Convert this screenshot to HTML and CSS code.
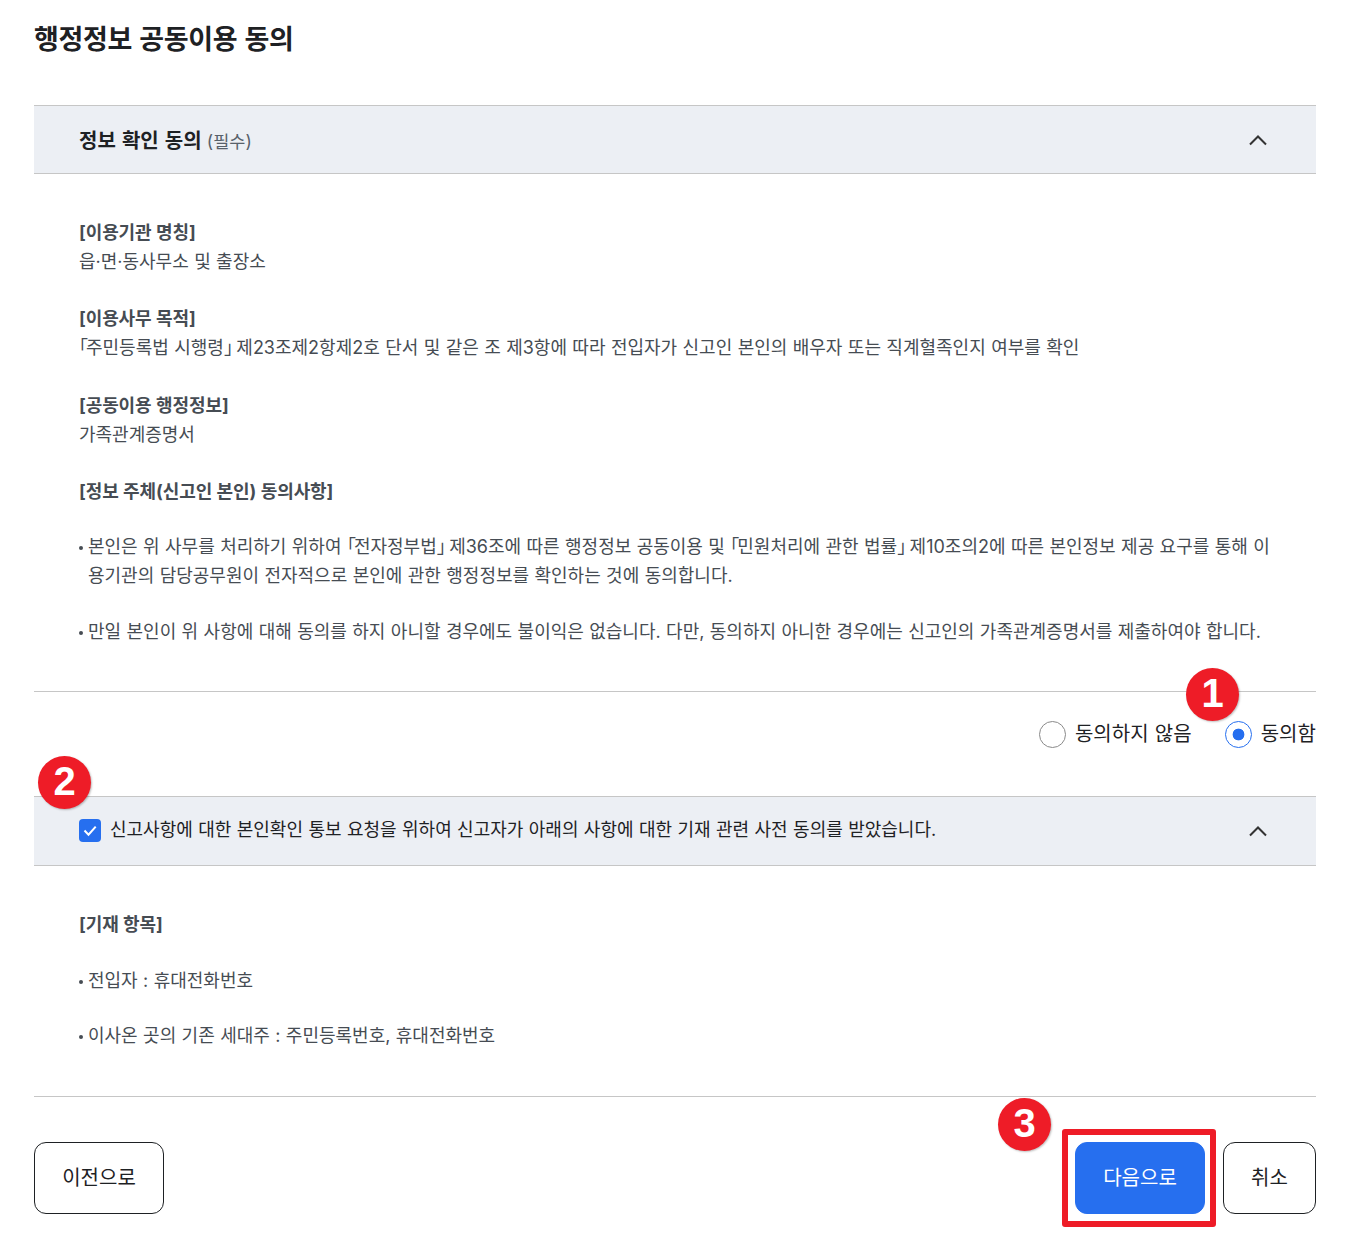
FILE: index.html
```html
<!DOCTYPE html>
<html lang="ko">
<head>
<meta charset="utf-8">
<title>행정정보 공동이용 동의</title>
<link rel="stylesheet" href="styles.css">
</head>
<body>
<main class="page">
  <h1 class="title">행정정보 공동이용 동의</h1>

  <section class="acc acc-first">
    <header class="acc-head">
      <h2 class="acc-title">정보 확인 동의 <span class="req">(필수)</span></h2>
      <svg class="chev" width="20" height="12" viewBox="0 0 20 12"><path d="M2 10.5 10 2.5l8 8" fill="none" stroke="#333" stroke-width="2"/></svg>
    </header>
    <div class="acc-body">
      <dl class="info">
        <dt>[이용기관 명칭]</dt>
        <dd>읍·면·동사무소 및 출장소</dd>
        <dt>[이용사무 목적]</dt>
        <dd><span class="br">「</span>주민등록법 시행령<span class="br">」</span> 제23조제2항제2호 단서 및 같은 조 제3항에 따라 전입자가 신고인 본인의 배우자 또는 직계혈족인지 여부를 확인</dd>
        <dt>[공동이용 행정정보]</dt>
        <dd>가족관계증명서</dd>
        <dt>[정보 주체(신고인 본인) 동의사항]</dt>
      </dl>
      <ul class="bullets">
        <li>본인은 위 사무를 처리하기 위하여 <span class="br">「</span>전자정부법<span class="br">」</span> 제36조에 따른 행정정보 공동이용 및 <span class="br">「</span>민원처리에 관한 법률<span class="br">」</span> 제10조의2에 따른 본인정보 제공 요구를 통해 이<br>용기관의 담당공무원이 전자적으로 본인에 관한 행정정보를 확인하는 것에 동의합니다.</li>
        <li>만일 본인이 위 사항에 대해 동의를 하지 아니할 경우에도 불이익은 없습니다. 다만, 동의하지 아니한 경우에는 신고인의 가족관계증명서를 제출하여야 합니다.</li>
      </ul>
    </div>
  </section>

  <div class="radios">
    <label class="radio"><span class="dot"></span>동의하지 않음</label>
    <label class="radio"><span class="dot dot-on"></span>동의함</label>
  </div>

  <section class="acc">
    <header class="acc-head acc-head-check">
      <label class="check">
        <svg class="box" width="22" height="23" viewBox="0 0 22 23"><rect width="22" height="23" rx="4" fill="#266fef"/><path d="M5.5 11.5l4 4.2 7.2-8" fill="none" stroke="#fff" stroke-width="2"/></svg>
        신고사항에 대한 본인확인 통보 요청을 위하여 신고자가 아래의 사항에 대한 기재 관련 사전 동의를 받았습니다.
      </label>
      <svg class="chev" width="20" height="12" viewBox="0 0 20 12"><path d="M2 10.5 10 2.5l8 8" fill="none" stroke="#333" stroke-width="2"/></svg>
    </header>
    <div class="acc-body acc-body-2">
      <p class="label">[기재 항목]</p>
      <ul class="bullets bullets-tight">
        <li>전입자 : 휴대전화번호</li>
        <li>이사온 곳의 기존 세대주 : 주민등록번호, 휴대전화번호</li>
      </ul>
    </div>
  </section>

  <footer class="actions">
    <button class="btn" type="button">이전으로</button>
    <div class="actions-right">
      <button class="btn btn-primary" type="button">다음으로</button>
      <button class="btn btn-cancel" type="button">취소</button>
    </div>
  </footer>
</main>

<span class="badge badge-1">1</span>
<span class="badge badge-2">2</span>
<span class="badge badge-3">3</span>
<span class="frame"></span>
</body>
</html>
```

FILE: styles.css
```css
* { box-sizing: border-box; }
html, body { margin: 0; padding: 0; background: #fff; }
body {
  position: relative;
  height: 1253px;
  overflow: hidden;
  font-family: Inter, "Noto Sans CJK KR", sans-serif;
  font-feature-settings: "halt";
  word-spacing: 0.35px;
  color: #1e2124;
}
.br { letter-spacing: -2px; }
.page { padding: 0 37px 0 34px; }
.title {
  margin: 0;
  padding-top: 19px;
  height: 105px;
  font-size: 27px;
  line-height: 42px;
  font-weight: 700;
  letter-spacing: -0.3px;
  word-spacing: 1px;
}
.acc-head {
  display: flex;
  align-items: center;
  justify-content: space-between;
  height: 69px;
  padding: 0 48px 0 45px;
  background: #eceff4;
  border-top: 1px solid #c6c6c6;
  border-bottom: 1px solid #c6c6c6;
}
.acc-head-check { height: 69.8px; }
.acc-title {
  margin: 0;
  padding-top: 3px;
  font-size: 20px;
  line-height: 30px;
  font-weight: 700;
  word-spacing: 1.4px;
}
.req { margin-left: -1px; font-size: 17.5px; font-weight: 400; color: #58616a; word-spacing: 0; }
.chev { display: block; }
.acc-body {
  padding: 45px 42px 44.5px 45px;
  border-bottom: 1px solid #c6c6c6;
  font-size: 18px;
  line-height: 28.8px;
  color: #464c53;
}
.info { margin: 0; }
.info dt { font-weight: 700; letter-spacing: -0.1px; }
.info dd { margin: 0 0 28.8px; }
.info dt:last-of-type { margin-bottom: 26px; }
.bullets { margin: 0; padding: 0; list-style: none; }
.bullets li { position: relative; padding-left: 9px; margin-bottom: 27px; }
.bullets li:last-child { margin-bottom: 0; }
.bullets-tight li { margin-bottom: 26px; }
.bullets li::before {
  content: "";
  position: absolute;
  left: 0;
  top: 13px;
  width: 4px;
  height: 4px;
  border-radius: 50%;
  background: #464c53;
}
.radios {
  display: flex;
  justify-content: flex-end;
  align-items: center;
  gap: 33px;
  height: 104px;
  padding-bottom: 18px;
  font-size: 20px;
  color: #1e2124;
}
.radio { display: flex; align-items: flex-start; gap: 9px; line-height: 27px; letter-spacing: 0.05px; }
.dot {
  width: 27px;
  height: 27px;
  border-radius: 50%;
  border: 1px solid #8a8a8a;
  background: #fff;
}
.dot-on {
  border-color: #266fef;
  background: radial-gradient(circle, #266fef 0 5.6px, #fff 6.2px);
}
.check { display: flex; align-items: flex-start; gap: 9px; font-size: 18px; line-height: 22px; color: #1e2124; }
.box { flex: none; }
.acc-body-2 { padding-bottom: 45px; }
.label { margin: 0 0 28px; font-weight: 700; letter-spacing: -0.1px; }
.actions {
  display: flex;
  justify-content: space-between;
  margin-top: 45px;
}
.actions-right { display: flex; gap: 18px; }
.btn {
  width: 130px;
  height: 72px;
  padding: 0 0 3px;
  border: 1px solid #1e2124;
  border-radius: 12px;
  background: #fff;
  font: inherit;
  font-size: 20px;
  color: #1e2124;
}
.btn-primary {
  background: #266fef;
  border-color: #266fef;
  color: #fff;
}
.btn-cancel { width: 93px; }
.badge {
  position: absolute;
  width: 53px;
  height: 53px;
  border-radius: 50%;
  background: #ee1c27;
  color: #fff;
  font-family: "Liberation Sans", sans-serif;
  font-size: 40px;
  font-weight: 700;
  line-height: 51px;
  text-align: center;
  box-shadow: 1px 1px 2px rgba(0,0,0,.25);
}
.badge-1 { left: 1186px; top: 668px; }
.badge-2 { left: 38px; top: 756px; }
.badge-3 { left: 998px; top: 1098px; }
.frame {
  position: absolute;
  left: 1062px;
  top: 1129px;
  width: 154px;
  height: 98px;
  border: 6px solid #ee1c27;
  border-radius: 3px;
}
```
